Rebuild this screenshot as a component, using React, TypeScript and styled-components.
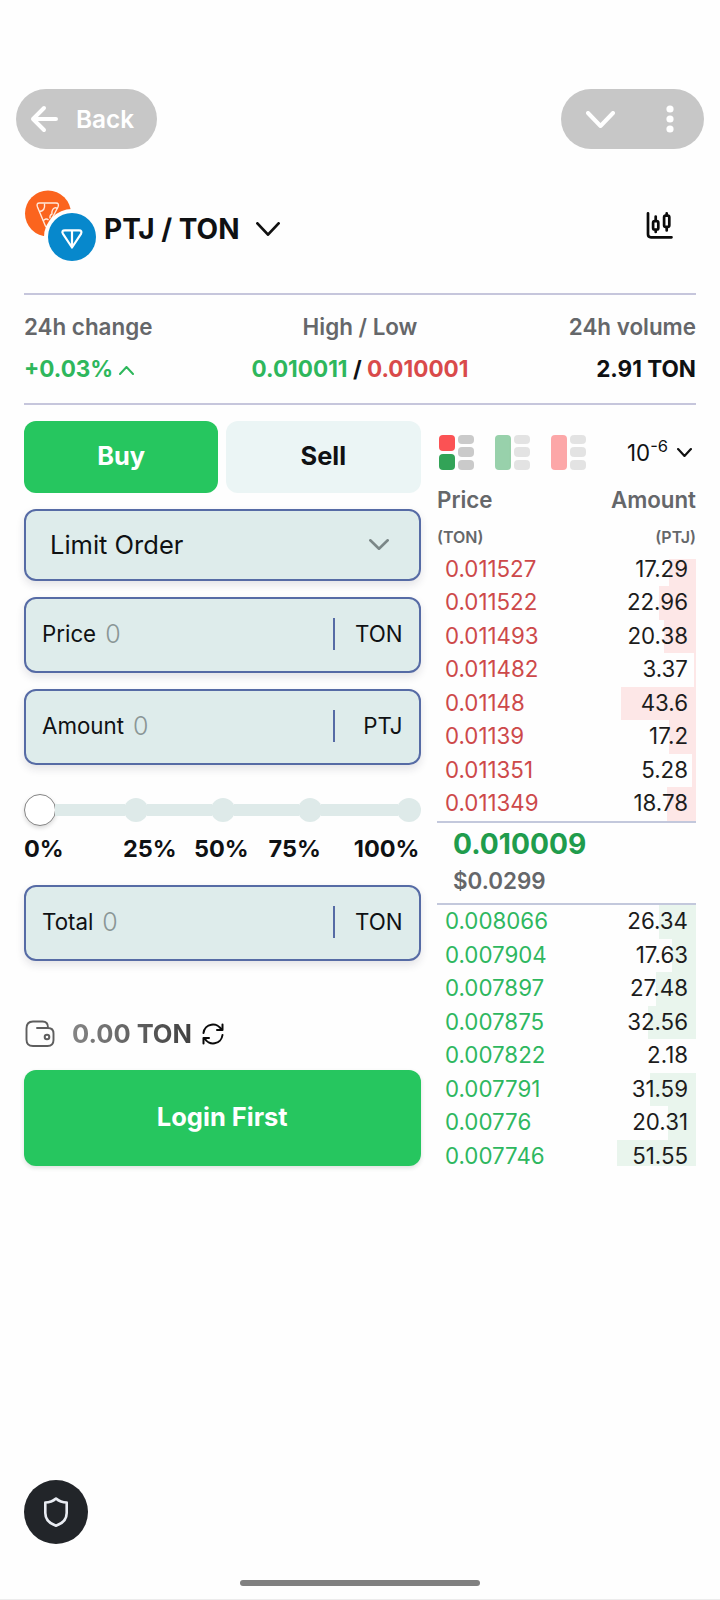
import React from "react";
import styled, { createGlobalStyle } from "styled-components";

const GlobalStyle = createGlobalStyle`
  *, *::before, *::after { box-sizing: border-box; }
  body {
    margin: 0;
    background: #fefefe;
    color: #0f1113;
    font-family: Inter, "Liberation Sans", sans-serif;
    font-size: 22.3px;
    line-height: 28px;
  }
  button { font: inherit; border: 0; padding: 0; color: inherit; background: none; }
`;

const Screen = styled.div`
  display: flex;
  flex-direction: column;
  height: 1600px;
  border-bottom: 1px solid #ececec;
`;

const TopBar = styled.header`
  display: flex;
  justify-content: space-between;
  padding: 89px 16px 0;
`;

const Pill = styled.div<{ $width: number }>`
  display: flex;
  align-items: center;
  width: ${(p) => p.$width}px;
  height: 60px;
  border-radius: 30px;
  background: #c7c7c7;
  color: #fff;
`;

const BackPill = styled(Pill)`
  padding-left: 14px;
  gap: 18px;
  font-size: 24.4px;
  font-weight: 600;
`;

const MenuPill = styled(Pill)`
  justify-content: space-between;
  padding: 0 30px 0 25px;
`;

const PairBar = styled.section`
  display: flex;
  align-items: flex-start;
  height: 144px;
  padding: 41px 24px 0;
`;

const Coins = styled.svg`
  flex: none;
  margin-right: 6px;
`;

const PairName = styled.h1`
  margin: 21px 16px 0 0;
  font-size: 28px;
  line-height: 36px;
  font-weight: 700;
`;

const PairChevron = styled.div`
  display: flex;
  margin-top: 32px;
`;

const ChartButton = styled.button`
  display: flex;
  margin: 21px 22px 0 auto;
`;

const Stats = styled.section`
  display: grid;
  grid-template-columns: 1fr auto 1fr;
  height: 112px;
  margin: 0 24px;
  padding-top: 18px;
  border-top: 2px solid #c6c6dc;
  border-bottom: 2px solid #c6c6dc;
`;

const Stat = styled.div<{ $align: string }>`
  text-align: ${(p) => p.$align};
  white-space: nowrap;
`;

const StatLabel = styled.div`
  color: #65676a;
  font-size: 22.4px;
  font-weight: 600;
`;

const StatValue = styled.div`
  margin-top: 14px;
  font-size: 22.5px;
  font-weight: 700;
`;

const Tone = styled.span<{ $color: string }>`
  color: ${(p) => p.$color};

  svg { vertical-align: 2px; }
`;

const Trade = styled.main`
  display: flex;
  gap: 16.5px;
  padding: 15.5px 24px 0;
`;

const Form = styled.section`
  display: flex;
  flex-direction: column;
  flex: none;
  width: 396.5px;
`;

const SideTabs = styled.div`
  display: flex;
  gap: 8px;
  margin-bottom: 16px;
`;

const SideTab = styled.button<{ $active?: boolean }>`
  flex: 1;
  height: 72px;
  padding-bottom: 2px;
  border-radius: 12px;
  background: ${(p) => (p.$active ? "#26c65f" : "#ebf5f5")};
  color: ${(p) => (p.$active ? "#fff" : "#0f1113")};
  font-size: 25.4px;
  font-weight: 700;
`;

const Box = styled.div<{ $height: number }>`
  display: flex;
  align-items: center;
  height: ${(p) => p.$height}px;
  border: 2px solid #566ba5;
  border-radius: 12px;
  background: #deeceb;
  box-shadow: 0 4px 8px rgba(30, 30, 60, 0.12);
  margin-bottom: 16px;
`;

const OrderType = styled(Box)`
  justify-content: space-between;
  padding: 0 30px 0 24px;
  font-size: 25.5px;
`;

const Field = styled(Box)`
  padding: 0 16px;
  padding-bottom: 2px;
`;

const Placeholder = styled.span`
  margin-left: 9px;
  font-size: 25px;
  font-weight: 300;
  color: #8a9696;
`;

const Unit = styled.span`
  display: flex;
  align-items: center;
  justify-content: flex-end;
  width: 70px;
  height: 32px;
  margin-left: auto;
  border-left: 2px solid #566ba5;
`;

const Slider = styled.div`
  display: flex;
  align-items: center;
  height: 32px;
  margin-top: 13px;
`;

const Thumb = styled.span`
  flex: none;
  width: 32px;
  height: 32px;
  border: 1.5px solid #858585;
  border-radius: 50%;
  background: #fff;
  box-shadow: 0 2px 4px rgba(0, 0, 0, 0.15);
`;

const Track = styled.span<{ $width: number }>`
  width: ${(p) => p.$width}px;
  height: 12px;
  margin: 0 -1px;
  background: #deeae9;
`;

const Stop = styled.span`
  flex: none;
  width: 24px;
  height: 24px;
  border-radius: 50%;
  background: #deeae9;
`;

const Percents = styled.div`
  display: flex;
  margin: 9px 0 22px;
  font-weight: 700;
  font-size: 23.5px;
  line-height: 28px;
`;

const Percent = styled.span<{ $width: number; $align?: string }>`
  width: ${(p) => p.$width}px;
  text-align: ${(p) => p.$align ?? "left"};
`;

const Balance = styled.div`
  display: flex;
  align-items: center;
  height: 36px;
  margin: 39px 0 18px;
`;

const BalanceText = styled.span`
  margin: 0 10px 0 16px;
  font-size: 25.5px;
  font-weight: 700;
  background: linear-gradient(90deg, #858585, #404040);
  background-clip: text;
  color: transparent;
`;

const Login = styled.button`
  height: 96px;
  padding-bottom: 2px;
  border-radius: 12px;
  background: #26c65f;
  box-shadow: 0 2px 4px rgba(30, 60, 40, 0.15);
  color: #fff;
  font-size: 25.5px;
  font-weight: 700;
`;

const Book = styled.section`
  flex: 1;
  display: flex;
  flex-direction: column;
`;

const BookTools = styled.div`
  display: flex;
  align-items: center;
  height: 65px;
  padding: 0 0 2px 2px;
`;

const ViewToggle = styled.div<{ $dim?: boolean }>`
  display: grid;
  grid-template-columns: 16px 16px;
  gap: 3px;
  height: 35px;
  margin-right: 21px;
  opacity: ${(p) => (p.$dim ? 0.5 : 1)};
`;

const Stack = styled.div`
  display: flex;
  flex-direction: column;
  gap: 3px;
`;

const Block = styled.span<{ $color: string }>`
  flex: 1;
  border-radius: 4px;
  background: ${(p) => p.$color};
`;

const Precision = styled.div`
  display: flex;
  align-items: center;
  gap: 9px;
  margin: 1px 4px 0 auto;
`;

const Power = styled.sup`
  font-size: 16.5px;
  line-height: 0;
  vertical-align: 9px;
`;

const BookHead = styled.div`
  display: flex;
  justify-content: space-between;
  color: #65676a;
  font-size: 22.3px;
  font-weight: 600;
`;

const HeadSub = styled(BookHead)`
  padding: 13px 0 12.5px;
  font-size: 16px;
  line-height: 20px;
`;

const Row = styled.div<{ $tint: string; $color: string }>`
  display: flex;
  flex: none;
  justify-content: space-between;
  height: 33.5px;
  line-height: 26px;
  color: ${(p) => p.$color};
  background-image: linear-gradient(${(p) => p.$tint}, ${(p) => p.$tint});
  background-repeat: no-repeat;
  background-position: right top;
`;

const Asks = styled.div`
  ${Row} {
    align-items: flex-end;
    padding: 0 8px 4.5px;
  }
  ${Row}:first-child { height: 27px; }
`;

const Bids = styled.div`
  ${Row} {
    align-items: flex-start;
    padding: 3px 8px 0;
  }
  ${Row}:last-child { height: 26px; }
`;

const Qty = styled.span`
  color: #1c1c1c;
`;

const Last = styled.div`
  height: 84.5px;
  padding: 5px 16px 0;
  border-top: 2px solid #c3c8dc;
  border-bottom: 2px solid #c3c8dc;
`;

const LastPrice = styled.div`
  color: #209c4c;
  font-size: 28.2px;
  line-height: 32px;
  font-weight: 700;
`;

const LastUsd = styled.div`
  margin-top: 7px;
  color: #65676a;
  font-size: 22.4px;
  font-weight: 600;
`;

const Fab = styled.button`
  display: flex;
  align-items: center;
  justify-content: center;
  width: 64px;
  height: 64px;
  margin: auto 0 36px 24px;
  border-radius: 50%;
  background: #222529;
`;

const HomeBar = styled.div`
  align-self: center;
  width: 240px;
  height: 6px;
  margin-bottom: 13px;
  border-radius: 3px;
  background: #808080;
`;

type Level = [string, string, number];

const asks: Level[] = [
  ["0.011527", "17.29", 27],
  ["0.011522", "22.96", 37],
  ["0.011493", "20.38", 32],
  ["0.011482", "3.37", 2],
  ["0.01148", "43.6", 75],
  ["0.01139", "17.2", 27],
  ["0.011351", "5.28", 4],
  ["0.011349", "18.78", 29],
];

const bids: Level[] = [
  ["0.008066", "26.34", 37],
  ["0.007904", "17.63", 24],
  ["0.007897", "27.48", 40],
  ["0.007875", "32.56", 48],
  ["0.007822", "2.18", 0],
  ["0.007791", "31.59", 46],
  ["0.00776", "20.31", 28],
  ["0.007746", "51.55", 79],
];

function Levels({ levels, tint, color }: { levels: Level[]; tint: string; color: string }) {
  return (
    <>
      {levels.map(([price, qty, depth]) => (
        <Row key={price} $tint={tint} $color={color} style={{ backgroundSize: `${depth}px 100%` }}>
          <span>{price}</span>
          <Qty>{qty}</Qty>
        </Row>
      ))}
    </>
  );
}

function Chevron({ w, h, stroke, color = "#111", up }: { w: number; h: number; stroke: number; color?: string; up?: boolean }) {
  const o = stroke / 2;
  const d = up ? `M${o} ${h - o}L${w / 2} ${o}L${w - o} ${h - o}` : `M${o} ${o}L${w / 2} ${h - o}L${w - o} ${o}`;
  return (
    <svg width={w} height={h} viewBox={`0 0 ${w} ${h}`} fill="none" stroke={color} strokeWidth={stroke} strokeLinecap="round" strokeLinejoin="round">
      <path d={d} />
    </svg>
  );
}

function AmountField({ label, unit }: { label: string; unit: string }) {
  return (
    <Field $height={76}>
      {label}
      <Placeholder>0</Placeholder>
      <Unit>{unit}</Unit>
    </Field>
  );
}

function BookView({ left, dim }: { left: string[]; dim?: boolean }) {
  return (
    <ViewToggle $dim={dim}>
      <Stack>
        {left.map((c) => (
          <Block key={c} $color={c} />
        ))}
      </Stack>
      <Stack>
        <Block $color="#cacaca" />
        <Block $color="#cacaca" />
        <Block $color="#cacaca" />
      </Stack>
    </ViewToggle>
  );
}

export default function App() {
  return (
    <Screen>
      <GlobalStyle />
      <TopBar>
        <BackPill $width={141}>
          <svg width="28" height="28" viewBox="0 0 28 28" fill="none" stroke="#fff" strokeWidth="4" strokeLinecap="round" strokeLinejoin="round">
            <path d="M26 14H3M14 3L3 14l11 11" />
          </svg>
          Back
        </BackPill>
        <MenuPill $width={143}>
          <Chevron w={29} h={17} stroke={4} color="#fff" />
          <svg width="8" height="28" viewBox="0 0 8 28" fill="#fff">
            <circle cx="4" cy="4" r="3.6" />
            <circle cx="4" cy="14" r="3.6" />
            <circle cx="4" cy="24" r="3.6" />
          </svg>
        </MenuPill>
      </TopBar>

      <PairBar>
        <Coins width="74" height="74" viewBox="0 0 74 74" fill="none">
          <circle cx="24" cy="23.5" r="23" fill="#fb641e" />
          <g stroke="#ffe9dc" strokeWidth="1.400" strokeLinejoin="round">
            <path d="M15.500 13h16.500q3.500 0 2 4L24 36q-2 2-3-1L13.500 17q-1.500-4 2-4z" />
            <path d="M20.500 13.500q1 8-5.500 8M33.500 18.500q-3-2-5 1.500q-1 2-.5 4q-2.500 1-2 4.500M19 31q3-3.500 5.500-1" />
          </g>
          <circle cx="48" cy="47" r="28" fill="#fefefe" />
          <circle cx="48" cy="47" r="24" fill="#0788cc" />
          <path d="M41 40.300h14q3.500 0 2 3.500L48 57.500 39 43.800q-2-3.500 2-3.500zM48 40.500V57" stroke="#fff" strokeWidth="2.200" strokeLinejoin="round" />
        </Coins>
        <PairName>PTJ / TON</PairName>
        <PairChevron>
          <Chevron w={24} h={14} stroke={2.8} />
        </PairChevron>
        <ChartButton>
          <svg width="28" height="28" viewBox="0 0 28 28" fill="none" stroke="#0a0a0a" strokeWidth="2.700" strokeLinecap="round" strokeLinejoin="round">
            <path d="M2 2.300v21q0 3 3 3h20.500M9.700 5.500v4M9.700 19v2M20.700 2.400v2M20.700 16.500v3" />
            <rect x="7.100" y="10.100" width="5.200" height="8.400" rx="1.600" />
            <rect x="18.100" y="4.700" width="5.200" height="11.200" rx="1.600" />
          </svg>
        </ChartButton>
      </PairBar>

      <Stats>
        <Stat $align="left">
          <StatLabel>24h change</StatLabel>
          <StatValue>
            <Tone $color="#2eb75c">
              +0.03% <Chevron w={15} h={9} stroke={2} color="#2eb75c" up />
            </Tone>
          </StatValue>
        </Stat>
        <Stat $align="center">
          <StatLabel>High / Low</StatLabel>
          <StatValue>
            <Tone $color="#2eb75c">0.010011</Tone> / <Tone $color="#d94a4a">0.010001</Tone>
          </StatValue>
        </Stat>
        <Stat $align="right">
          <StatLabel>24h volume</StatLabel>
          <StatValue>2.91 TON</StatValue>
        </Stat>
      </Stats>

      <Trade>
        <Form>
          <SideTabs>
            <SideTab $active>Buy</SideTab>
            <SideTab>Sell</SideTab>
          </SideTabs>
          <OrderType $height={72}>
            Limit Order
            <Chevron w={20} h={11} stroke={2.6} color="#7b8787" />
          </OrderType>
          <AmountField label="Price" unit="TON" />
          <AmountField label="Amount" unit="PTJ" />
          <Slider>
            <Thumb />
            <Track $width={70} />
            <Stop />
            <Track $width={65} />
            <Stop />
            <Track $width={65} />
            <Stop />
            <Track $width={76.5} />
            <Stop />
          </Slider>
          <Percents>
            <Percent $width={99}>0%</Percent>
            <Percent $width={71}>25%</Percent>
            <Percent $width={74.5}>50%</Percent>
            <Percent $width={60}>75%</Percent>
            <Percent $width={91} $align="right">100%</Percent>
          </Percents>
          <AmountField label="Total" unit="TON" />
          <Balance>
            <svg width="32" height="32" viewBox="0 0 32 32" fill="none" stroke="#5e5e5e" strokeWidth="1.900" strokeLinecap="round" strokeLinejoin="round">
              <path d="M13 10h11q5.500 0 5.500 5.500v6.500q0 6-6 6H9q-6.500 0-6.500-6.500V10.500Q2.500 3.500 9 3.500h9.500q5.500 0 5.500 6" />
              <circle cx="23" cy="19" r="2.300" strokeWidth="2" />
            </svg>
            <BalanceText>0.00 TON</BalanceText>
            <svg width="22" height="22" viewBox="0 0 22 22" fill="none" stroke="#0a0a0a" strokeWidth="2" strokeLinecap="round" strokeLinejoin="round">
              <path d="M1.500 10A9.500 9.500 0 0 1 19.500 7M20.500 1.500V7H15M20.500 12A9.500 9.500 0 0 1 2.500 15M1.500 20.500V15H7" />
            </svg>
          </Balance>
          <Login>Login First</Login>
        </Form>

        <Book>
          <BookTools>
            <BookView left={["#fb5254", "#32a357"]} />
            <BookView left={["#32a357"]} dim />
            <BookView left={["#fb5254"]} dim />
            <Precision>
              <span>
                10<Power>-6</Power>
              </span>
              <Chevron w={15} h={9} stroke={2.2} />
            </Precision>
          </BookTools>
          <BookHead>
            <span>Price</span>
            <span>Amount</span>
          </BookHead>
          <HeadSub>
            <span>(TON)</span>
            <span>(PTJ)</span>
          </HeadSub>
          <Asks>
            <Levels levels={asks} tint="#fde7e7" color="#cd494a" />
          </Asks>
          <Last>
            <LastPrice>0.010009</LastPrice>
            <LastUsd>$0.0299</LastUsd>
          </Last>
          <Bids>
            <Levels levels={bids} tint="#e9f5ed" color="#2eb75f" />
          </Bids>
        </Book>
      </Trade>

      <Fab>
        <svg width="26" height="32" viewBox="0 0 26 32" fill="none" stroke="#e9ecf2" strokeWidth="2.600" strokeLinejoin="round">
          <path d="M13 2.500Q8.500 6.500 2.300 6.500V17Q2.300 26 13 29.700 23.700 26 23.700 17V6.500Q17.500 6.500 13 2.500z" />
        </svg>
      </Fab>
      <HomeBar />
    </Screen>
  );
}
